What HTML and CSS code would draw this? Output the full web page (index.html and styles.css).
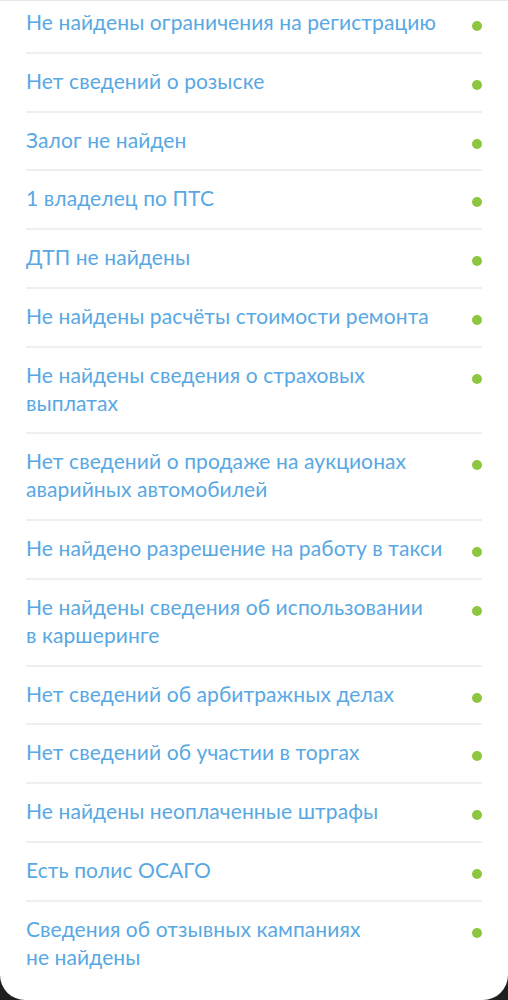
FILE: index.html
```html
<!DOCTYPE html>
<html lang="ru">
<head>
<meta charset="utf-8">
<link rel="stylesheet" href="styles.css">
</head>
<body>
<div class="card">
  <ul class="list">
    <li class="row first"><span class="label">Не найдены ограничения на регистрацию</span><span class="dot"></span></li>
    <li class="row"><span class="label">Нет сведений о розыске</span><span class="dot"></span></li>
    <li class="row"><span class="label">Залог не найден</span><span class="dot"></span></li>
    <li class="row"><span class="label">1 владелец по ПТС</span><span class="dot"></span></li>
    <li class="row"><span class="label">ДТП не найдены</span><span class="dot"></span></li>
    <li class="row"><span class="label">Не найдены расчёты стоимости ремонта</span><span class="dot"></span></li>
    <li class="row"><span class="label">Не найдены сведения о страховых выплатах</span><span class="dot"></span></li>
    <li class="row"><span class="label">Нет сведений о продаже на аукционах аварийных автомобилей</span><span class="dot"></span></li>
    <li class="row"><span class="label">Не найдено разрешение на работу в такси</span><span class="dot"></span></li>
    <li class="row"><span class="label">Не найдены сведения об использовании в&nbsp;каршеринге</span><span class="dot"></span></li>
    <li class="row"><span class="label">Нет сведений об арбитражных делах</span><span class="dot"></span></li>
    <li class="row"><span class="label">Нет сведений об участии в торгах</span><span class="dot"></span></li>
    <li class="row"><span class="label">Не найдены неоплаченные штрафы</span><span class="dot"></span></li>
    <li class="row"><span class="label">Есть полис ОСАГО</span><span class="dot"></span></li>
    <li class="row last"><span class="label">Сведения об отзывных кампаниях не&nbsp;найдены</span><span class="dot"></span></li>
  </ul>
</div>
</body>
</html>
```

FILE: styles.css
```css
html, body {
  margin: 0;
  padding: 0;
  background: #1f1f1f;
}
body {
  width: 508px;
  height: 1000px;
  overflow: hidden;
  font-family: Lato, "Noto Sans", sans-serif;
}
.card {
  background: #ffffff;
  height: 1000px;
  border-top: 1px solid #e6e6e6;
  box-sizing: border-box;
  border-radius: 0 0 25px 25px;
  overflow: hidden;
}
.list {
  list-style: none;
  margin: 0;
  padding: 0 26px;
}
.row {
  display: flex;
  align-items: flex-start;
  gap: 18px;
  padding: 13px 0 15.75px;
  border-bottom: 2px solid #efefef;
}
.row.first {
  padding-top: 7px;
}
.row.last {
  border-bottom: none;
}
.label {
  flex: 1;
  font-size: 21px;
  line-height: 28px;
  color: #58a8e3;
  letter-spacing: 0.1px;
}
.dot {
  flex: none;
  width: 10px;
  height: 10px;
  border-radius: 50%;
  background: #8dc63f;
  margin-top: 13px;
}
```
